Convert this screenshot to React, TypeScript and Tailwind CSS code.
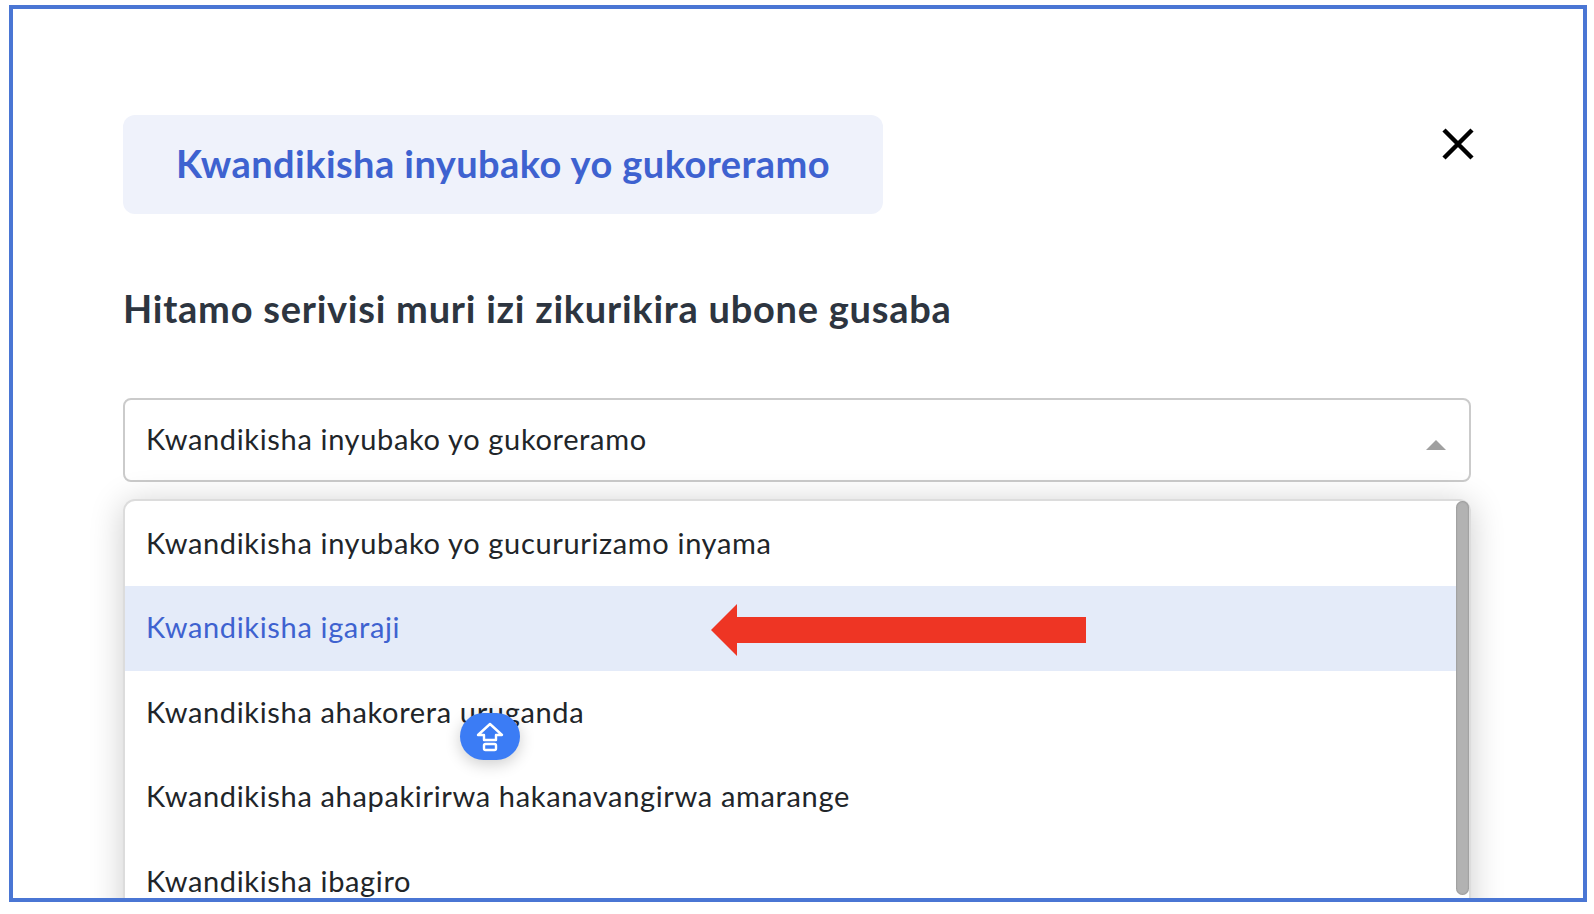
const font = "font-['Lato','Noto_Sans',sans-serif]";

const options = [
  "Kwandikisha inyubako yo gucururizamo inyama",
  "Kwandikisha igaraji",
  "Kwandikisha ahakorera uruganda",
  "Kwandikisha ahapakirirwa hakanavangirwa amarange",
  "Kwandikisha ibagiro",
];

export default function App() {
  return (
    <div className={`min-h-screen bg-white pt-[5px] pl-[9px] ${font}`}>
      <div className="w-[1578px] h-[897px] border-4 border-[#4a76d4] overflow-hidden pt-[106px] pl-[110px] pr-[112px]">
        {/* Header */}
        <div className="flex justify-between items-start">
          <div className="h-[99px] w-[760px] rounded-xl bg-[#eff2fb] flex items-center justify-center pb-[2px]">
            <h1 className="text-[38px] font-bold tracking-[0.43px] text-[#3e62d0]">Kwandikisha inyubako yo gukoreramo</h1>
          </div>
          <svg className="mt-[12px] mr-[-4px] w-[34px] h-[34px]" viewBox="0 0 34 34" fill="none" stroke="#000" strokeWidth="4.5">
            <path d="M3 3L31 31M31 3L3 31" />
          </svg>
        </div>

        <h2 className="mt-[69px] text-[38px] leading-[50px] font-bold tracking-[0.75px] text-[#2d3540]">Hitamo serivisi muri izi zikurikira ubone gusaba</h2>

        {/* Select */}
        <div className="mt-[65px] h-[84px] rounded-lg border-2 border-[#cbcbcb] pl-[21px] pr-[23px] pb-[3px] flex items-center justify-between">
          <span className="text-[29px] tracking-[0.65px] text-[#212529]">Kwandikisha inyubako yo gukoreramo</span>
          <svg className="mt-[13px] w-[20px] h-[10px]" viewBox="0 0 20 10" fill="#a0a0a0">
            <path d="M10 0L20 10H0Z" />
          </svg>
        </div>

        {/* Dropdown */}
        <div className="relative mt-[17px] h-[440px] rounded-t-xl border-2 border-b-0 border-[#dcdcdc] bg-white shadow-[0_4px_34px_rgba(0,0,0,0.2)]">
          <div className="absolute right-0 top-0 h-[394px] w-[13px] rounded-full bg-[#b2b2b2] shadow-[inset_0_0_2px_rgba(0,0,0,0.35)]" />
          <ul className="pt-[1px] pr-[13px]">
            {options.map((option, i) => (
              <li
                key={option}
                className={`h-[84.4px] pl-[21px] pb-[3px] flex items-center text-[29px] tracking-[0.65px] ${i === 1 ? "bg-[#e4ebf9] text-[#3e62d0]" : "text-[#212529]"}`}
              >
                {option}
              </li>
            ))}
          </ul>

          {/* Red annotation arrow */}
          <svg className="absolute left-[586px] top-[103px] w-[375px] h-[52px]" viewBox="0 0 375 52" fill="#ee3524">
            <path d="M0 26L26 0V13H375V39H26V52Z" />
          </svg>

          {/* Floating button */}
          <button className="absolute left-[335px] top-[212px] w-[60px] h-[47px] rounded-full bg-[#3b7cf5] shadow-[0_4px_16px_rgba(0,0,0,0.2)] flex items-center justify-center">
            <svg className="w-[30px] h-[30px]" viewBox="0 0 30 30" fill="none" stroke="#fff" strokeWidth="2.4" strokeLinejoin="round">
              <path d="M15 2L27 13H21V18H9V13H3Z" />
              <rect x="9" y="22" width="12" height="6" rx="1.5" />
            </svg>
          </button>
        </div>
      </div>
    </div>
  );
}
